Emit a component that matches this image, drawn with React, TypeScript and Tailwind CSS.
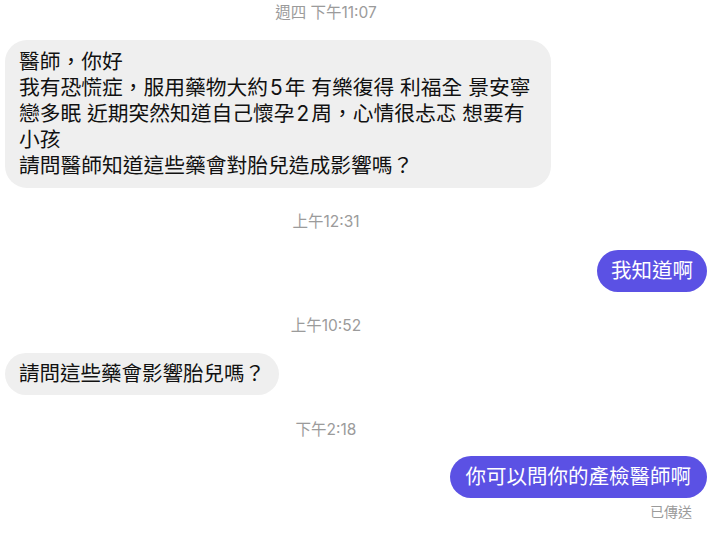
import React from "react";

const font = {
  fontFamily: 'Inter, "Noto Sans CJK TC", "Noto Sans", sans-serif',
};

function Stamp({ children, cls }: { children: React.ReactNode; cls: string }) {
  return (
    <div className={`w-[652px] text-center text-[15.5px] leading-[18px] text-[#9b9b9b] ${cls}`}>
      {children}
    </div>
  );
}

function D({ children }: { children: React.ReactNode }) {
  return <span className="mx-[2px]">{children}</span>;
}

export default function App() {
  return (
    <div className="w-[717px] h-[540px] bg-white overflow-hidden flex flex-col" style={font}>
      <Stamp cls="mt-[4px]">週四 下午11:07</Stamp>

      <div className="mt-[18px] ml-[5px] w-[546px] rounded-[22px] bg-[#efefef] px-[14px] py-[9px] text-[20.75px] leading-[26px] text-[#111]">
        <div className="whitespace-nowrap">醫師，你好</div>
        <div className="whitespace-nowrap">
          我有恐慌症，服用藥物大約<D>5</D>年 有樂復得 利福全 景安寧
        </div>
        <div className="whitespace-nowrap">
          戀多眠 近期突然知道自己懷孕<D>2</D>周，心情很忐忑 想要有
        </div>
        <div className="whitespace-nowrap">小孩</div>
        <div className="whitespace-nowrap">請問醫師知道這些藥會對胎兒造成影響嗎？</div>
      </div>

      <Stamp cls="mt-[25px]">上午12:31</Stamp>

      <div className="mt-[19px] flex justify-end pr-[10px]">
        <div className="rounded-[21px] bg-[#5b51e4] px-[14px] py-[8px] text-[20.5px] leading-[26px] text-white whitespace-nowrap">
          我知道啊
        </div>
      </div>

      <Stamp cls="mt-[25px]">上午10:52</Stamp>

      <div className="mt-[18px] ml-[5px] flex">
        <div className="rounded-[21px] bg-[#efefef] px-[14px] py-[8px] text-[20.5px] leading-[26px] text-[#111] whitespace-nowrap">
          請問這些藥會影響胎兒嗎？
        </div>
      </div>

      <Stamp cls="mt-[26px]">下午2:18</Stamp>

      <div className="mt-[17px] flex justify-end pr-[10px]">
        <div className="rounded-[21px] bg-[#5b51e4] px-[16px] py-[8px] text-[20.5px] leading-[26px] text-white whitespace-nowrap">
          你可以問你的產檢醫師啊
        </div>
      </div>

      <div className="mt-[6px] flex justify-end pr-[25px] text-[14px] leading-[16px] text-[#9b9b9b]">
        已傳送
      </div>
    </div>
  );
}
